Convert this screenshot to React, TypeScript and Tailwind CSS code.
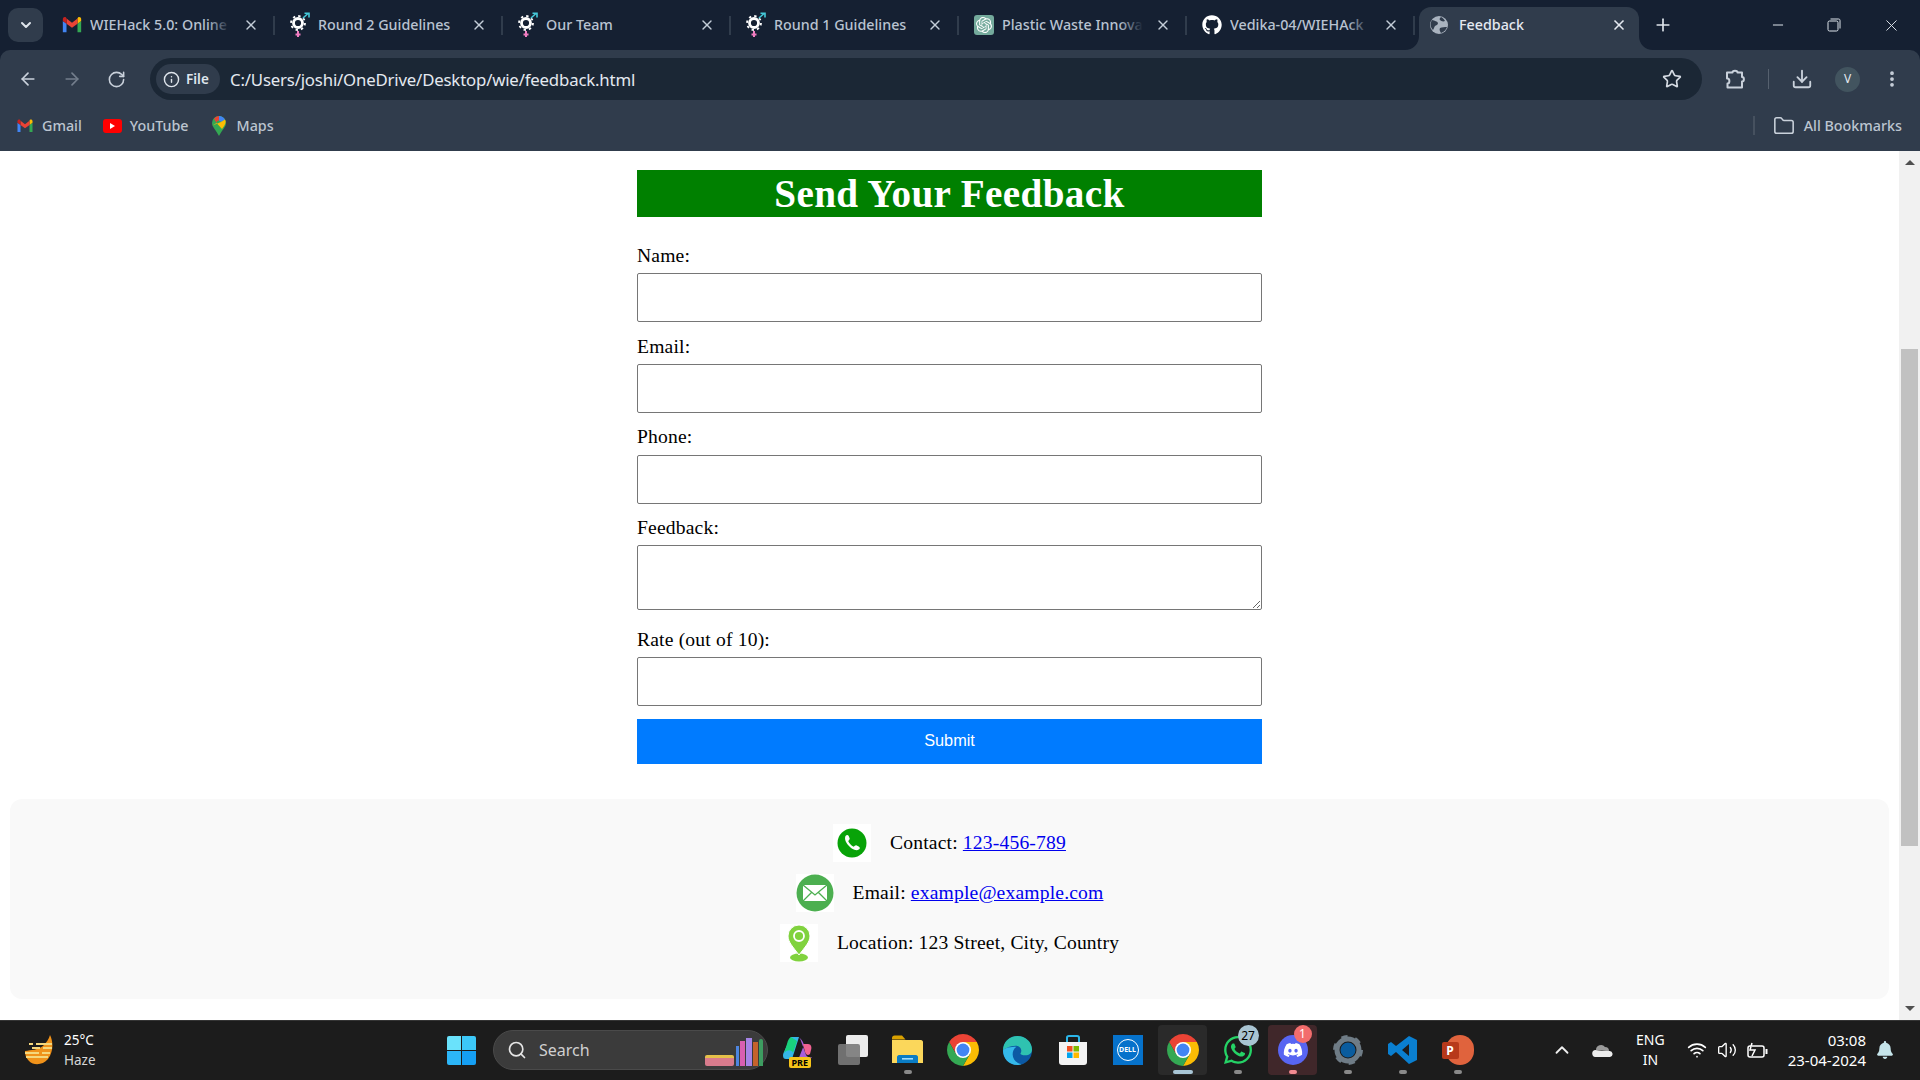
import React from "react";
import { ArrowLeft, ArrowRight, ChevronDown, ChevronUp, Download, Folder, Info, Minus, MoreVertical, Plus, RotateCw, Search, Star, Volume2, Wifi, X } from "lucide-react";
import { FaGithub, FaWhatsapp, FaDiscord, FaBell } from "react-icons/fa";
import { SiOpenai } from "react-icons/si";

const GenderGear = () => (
    <svg width="22" height="26" viewBox="0 0 22 26" fill="none">
        <circle cx="9" cy="11" r="4.500" stroke="#fff" strokeWidth="2.800" />
        <circle cx="9" cy="11" r="7" stroke="#fff" strokeWidth="1.800" strokeDasharray="2.400 3.100" />
        <path d="M14 6 19 1.500M15.500 1.200H20V5.500" stroke="#45c8d8" strokeWidth="1.600" />
        <path d="M9 19v6M6.500 22.500h5" stroke="#f07cc0" strokeWidth="2" />
    </svg>
);

const Gmail = ({ size = 18 }: { size?: number }) => (
    <svg width={size} height={size} viewBox="0 0 24 24">
        <path fill="#4285F4" d="M2 20h4v-9.500l-4-3z" />
        <path fill="#34A853" d="M18 20h4V7.500l-4 3z" />
        <path fill="#FBBC04" d="M18 5v5.500l4-3v-2c0-1.800-2-2.800-3.400-1.700z" />
        <path fill="#EA4335" d="M6 10.500V5l6 4.500L18 5v5.500L12 15z" />
        <path fill="#C5221F" d="M2 5.500v2l4 3V5L5.400 3.800C4 2.700 2 3.700 2 5.500z" />
    </svg>
);

const Chrome = () => (
    <svg width="32" height="32" viewBox="4 4 40 40">
        <path fill="#EA4335" d="M6.680 14A20 20 0 0 1 41.320 14L24 14 15.340 29z" />
        <path fill="#FBBC04" d="M41.320 14A20 20 0 0 1 24 44L32.660 29 24 14z" />
        <path fill="#34A853" d="M24 44A20 20 0 0 1 6.680 14L15.340 29 32.660 29z" />
        <circle cx="24" cy="24" r="10" fill="#fff" />
        <circle cx="24" cy="24" r="8" fill="#4285F4" />
    </svg>
);

const Edge = () => (
    <svg width="31" height="31" viewBox="0 0 32 32">
        <circle cx="16" cy="16" r="15" fill="#0c59a4" />
        <path fill="#2fc2b0" d="M1 16C1 7 8 1 16 1c8 0 15 6 15 14 0 4-3 6-7 6-3 0-5-1-5-2 2-2 1-8-5-8-6 0-11 3-13 5z" />
        <path fill="#35b9ea" d="M1 16c0 8 6 15 15 15 1 0 3 0 4-1-5-1-9-5-9-10 0-3 1-6 4-8-6 0-12 1-14 4z" />
    </svg>
);

const Store = () => (
    <svg width="30" height="32" viewBox="0 0 30 32">
        <path d="M9 8V3.500C9 2.500 10 2 11 2h8c1 0 2 .5 2 1.500V8" fill="none" stroke="#2bb5e8" strokeWidth="2" />
        <path d="M1 8h28v20c0 2-1 3-3 3H4c-2 0-3-1-3-3z" fill="#f3f3f3" />
        <rect x="9" y="12" width="5.500" height="5.500" fill="#f25022" />
        <rect x="15.500" y="12" width="5.500" height="5.500" fill="#7fba00" />
        <rect x="9" y="18.500" width="5.500" height="5.500" fill="#00a4ef" />
        <rect x="15.500" y="18.500" width="5.500" height="5.500" fill="#ffb900" />
    </svg>
);

const FileFolder = () => (
    <svg width="31" height="30" viewBox="0 0 31 30">
        <path d="M0 3c0-1.500 1-2.500 2.500-2.500H10l3.500 4H0z" fill="#d9a100" />
        <path d="M0 5h29c1 0 2 1 2 2v21H0z" fill="#fbd75b" />
        <path d="M5 28V22c0-1 1-2 2-2h17c1 0 2 1 2 2v6z" fill="#0a7cc4" />
        <rect x="10" y="23" width="11" height="1.600" fill="#9fdcff" />
    </svg>
);

const Copilot = () => (
    <div className="relative h-[30px] w-[30px]">
        <svg width="30" height="26" viewBox="0 0 30 26">
            <path d="M8 2h8L9 24H3C0 24-.5 21 .5 18z" fill="#35b6e8" />
            <path d="M8 2c-2 1-3 3-4 7l-3 9c4-4 8-3 9 0l4-12z" fill="#19d27c" />
            <path d="M14 2c2 0 3 1 4 4l5 14c1 2 4 3 6 2-1 2-3 3-5 3h-9l6-15c-1-4-4-8-7-8z" fill="#a65ddb" />
            <path d="M20 9h5c3 0 4 3 3 6l-1 4c-2 2-4 1-5-2z" fill="#f06292" />
        </svg>
        <div className="absolute -bottom-[3px] left-[6px] rounded-[2px] bg-[#f6c419] px-[3px] text-[9px] leading-[11px] font-bold text-black">PRE</div>
    </div>
);

const TaskView = () => (
    <div className="relative h-[30px] w-[30px]">
        <div className="absolute top-0 right-0 h-[22px] w-[22px] rounded-[2px] bg-[#ececec]" />
        <div className="absolute bottom-0 left-0 h-[21px] w-[22px] rounded-[2px] bg-[#7a7a7a]/90" />
    </div>
);

const Settings = () => (
    <svg width="30" height="30" viewBox="0 0 30 30">
        <circle cx="15" cy="15" r="11" fill="none" stroke="#6f7c86" strokeWidth="5" />
        <circle cx="15" cy="15" r="13" fill="none" stroke="#6f7c86" strokeWidth="4" strokeDasharray="6 7.600" />
        <circle cx="15" cy="15" r="7.500" fill="#0a5c9e" />
    </svg>
);

const VsCode = () => (
    <svg width="30" height="30" viewBox="0 0 30 30">
        <path d="M21 1l8 4v20l-8 4-13-12-5 4-3-2v-10l3-2 5 4zM21 9l-7 6 7 6z" fill="#0a7fd0" />
    </svg>
);

const Powerpoint = () => (
    <div className="relative h-[30px] w-[32px]">
        <div className="absolute top-0 right-0 h-[30px] w-[28px] rounded-full bg-[#e0633d]" />
        <div className="absolute top-[7px] left-0 flex h-[17px] w-[17px] items-center justify-center rounded-[2px] bg-[#b7391b] text-[12px] font-bold text-white">P</div>
    </div>
);

const Tab = ({ icon, title, fade }: { icon: React.ReactNode; title: string; fade?: boolean }) => (
    <div className="relative flex h-[36px] w-[228px] shrink-0 items-center pl-[14px]">
        <div className="flex w-[22px] justify-center">{icon}</div>
        <div className="relative ml-[7px] w-[141px] overflow-hidden text-[14.300px] font-medium whitespace-nowrap text-[#b9c3d1]">
            {title}
            {fade && <div className="absolute top-0 right-0 h-full w-[24px] bg-gradient-to-r from-transparent to-[#152032]" />}
        </div>
        <X size={16} strokeWidth={2} className="ml-[12px] text-[#c4cdd8]" />
        <div className="absolute top-[9px] right-0 h-[19px] w-[2px] bg-[#303c4c]" />
    </div>
);

const Chip = ({ active, activeBg, dot, children }: { active?: boolean; activeBg?: string; dot?: string; children: React.ReactNode }) => (
    <div className={`relative flex h-[50px] w-[55px] items-center justify-center ${active ? "rounded-[4px]" : ""}`}>
        {active && <div className={`absolute inset-x-[3px] inset-y-0 rounded-[4px] ${activeBg}`} />}
        <div className="relative">{children}</div>
        {dot && <div className={`absolute bottom-[1px] h-[4px] rounded-full ${dot}`} />}
    </div>
);

const Field = ({ label, type = "text", labelClass = "mb-[6px]" }: { label: string; type?: string; labelClass?: string }) => (
    <>
        <label className={`block h-[22px] leading-[22px] ${labelClass}`}>{label}</label>
        <input type={type} className="mb-[14px] block h-[49px] w-full rounded-[2px] border border-[#767676] bg-white" />
    </>
);

const App: React.FC = () => {
    return (
        <div className="flex h-screen w-full flex-col overflow-hidden bg-[#152032] font-['Noto_Sans',sans-serif]">
            {/* tab strip */}
            <div className="flex h-[50px] shrink-0 items-start pt-[7px]">
                <div className="mt-[1px] ml-[8px] flex h-[34px] w-[35px] items-center justify-center rounded-[10px] bg-[#303c4c] text-[#dfe5ec]">
                    <ChevronDown size={16} strokeWidth={3} />
                </div>
                <div className="ml-[4px] flex">
                    <Tab icon={<Gmail size={22} />} title="WIEHack 5.0: Online" fade />
                    <Tab icon={<GenderGear />} title="Round 2 Guidelines" />
                    <Tab icon={<GenderGear />} title="Our Team" />
                    <Tab icon={<GenderGear />} title="Round 1 Guidelines" />
                    <Tab icon={<div className="flex h-[20px] w-[20px] items-center justify-center rounded-[3px] bg-[#74aa9c] text-white"><SiOpenai size={16} /></div>} title="Plastic Waste Innova" fade />
                    <Tab icon={<FaGithub size={20} className="text-white" />} title="Vedika-04/WIEHAck" fade />
                </div>
                <div className="relative ml-[4px] flex h-[43px] w-[220px] shrink-0 items-start rounded-t-[12px] bg-[#303c4c] pt-[9px] pl-[11px] text-[#e4e9f0]">
                    <svg width="18" height="18" viewBox="0 0 18 18">
                        <circle cx="9" cy="9" r="9" fill="#a9b3bf" />
                        <path d="M2 4c3 1 5 1 6 3 0 2-2 2-3 3s-1 3-2 4C0 11 0 7 2 4zM11 1c2 1 3 2 4 4-2 1-4 0-5-1s0-2 1-3zM10 12c2-1 5-1 7-1-1 3-3 5-6 6-1-2-2-3-1-5z" fill="#303c4c" />
                    </svg>
                    <span className="-mt-[1px] ml-[11px] text-[14.300px] leading-[20px] font-medium">Feedback</span>
                    <X size={16} strokeWidth={2.500} className="absolute top-[10px] right-[12px]" />
                    <svg className="absolute bottom-0 -left-[14px]" width="14" height="14" viewBox="0 0 14 14"><path d="M14 0v14H0c8 0 14-6 14-14z" fill="#303c4c" /></svg>
                    <svg className="absolute -right-[14px] bottom-0" width="14" height="14" viewBox="0 0 14 14"><path d="M0 0v14h14C6 14 0 8 0 0z" fill="#303c4c" /></svg>
                </div>
                <Plus size={20} strokeWidth={2} className="mt-[8px] ml-[14px] text-[#dfe5ec]" />
                <div className="mt-[4px] ml-auto flex h-[28px] items-center text-[#dfe5ec]">
                    <div className="flex w-[56px] justify-center"><Minus size={16} strokeWidth={1.500} /></div>
                    <div className="flex w-[56px] justify-center">
                        <svg width="14" height="14" viewBox="0 0 14 14" fill="none" stroke="currentColor"><rect x="1" y="3" width="10" height="10" rx="1.500" /><path d="M3.500 1H11.500C12.500 1 13 1.500 13 2.500V10.500" /></svg>
                    </div>
                    <div className="flex w-[58px] justify-center"><X size={19} strokeWidth={1.200} /></div>
                </div>
            </div>

            {/* toolbar */}
            <div className="flex h-[50px] shrink-0 items-start rounded-t-[10px] bg-[#303c4c] pt-[8px] text-[#c9d1db]">
                <div className="ml-[18px] flex h-[42px] items-center gap-[24px]">
                    <ArrowLeft size={20} strokeWidth={2} />
                    <ArrowRight size={20} strokeWidth={2} className="text-[#737e8c]" />
                    <RotateCw size={19} strokeWidth={2} className="ml-[1px]" />
                </div>
                <div className="ml-[24px] flex h-[42px] w-[1552px] items-center rounded-full bg-[#1b2735] pl-[6px]">
                    <div className="flex h-[30px] w-[64px] items-center rounded-full bg-[#303c4c] pl-[7px] text-[#dfe5ec]">
                        <Info size={17} strokeWidth={2} />
                        <span className="ml-[6px] text-[13.500px] font-semibold">File</span>
                    </div>
                    <span className="mt-[1px] ml-[10px] text-[16.800px] tracking-[-0.18px] text-[#e4e9f0]">C:/Users/joshi/OneDrive/Desktop/wie/feedback.html</span>
                    <Star size={20} strokeWidth={2} className="mr-[20px] ml-auto text-[#d5dbe3]" />
                </div>
                <div className="flex h-[42px] items-center">
                    <svg className="ml-[23px]" width="21" height="21" viewBox="0 0 21 21" fill="none" stroke="currentColor" strokeWidth="2" strokeLinejoin="round">
                        <path d="M2 3.500h5.500C7.500 1 12.500 1 12.500 3.500H17v4.500c2.500 0 2.500 4.500 0 4.500v6H2.500v-4c2.500 0 2.500-5 0-5H2z" />
                    </svg>
                    <div className="ml-[22px] h-[20px] w-[1px] bg-[#56616f]" />
                    <Download size={22} strokeWidth={2} className="ml-[22px]" />
                    <div className="ml-[22px] flex h-[25px] w-[25px] items-center justify-center rounded-full bg-[#42545f] text-[12px] text-[#e4e9f0]">V</div>
                    <MoreVertical size={20} strokeWidth={2.500} className="ml-[22px]" />
                </div>
            </div>

            {/* bookmarks */}
            <div className="flex h-[51px] shrink-0 items-center bg-[#303c4c] text-[14.300px] font-medium text-[#bcc5d0]">
                <div className="ml-[16px] flex items-center gap-[8px]"><Gmail /><span>Gmail</span></div>
                <div className="ml-[21px] flex items-center gap-[8px]">
                    <div className="flex h-[14px] w-[19px] items-center justify-center rounded-[3px] bg-[#f00]">
                        <div className="h-0 w-0 border-y-[3px] border-l-[5px] border-y-transparent border-l-white" />
                    </div>
                    <span>YouTube</span>
                </div>
                <div className="ml-[23px] flex items-center gap-[11px]">
                    <svg width="14" height="20" viewBox="0 0 14 20">
                        <path d="M7 0a7 7 0 0 1 7 7c0 4-4 7-7 13C4 14 0 11 0 7a7 7 0 0 1 7-7z" fill="#34a853" />
                        <path d="M2 2.500A7 7 0 0 1 7 0v4.500A2.500 2.500 0 0 0 4.500 7z" fill="#ea4335" />
                        <path d="M7 0a7 7 0 0 1 6 3.500L9 6a2.500 2.500 0 0 0-2-1.500z" fill="#4285f4" />
                        <path d="M.5 9.500 9 6l4-2.500C15 7 12 10 10 13L4.500 7z" fill="#fbbc04" />
                    </svg>
                    <span>Maps</span>
                </div>
                <div className="ml-auto h-[19px] w-[2px] bg-[#46515f]" />
                <Folder size={22} strokeWidth={1.700} className="ml-[18px] text-[#c9d1db]" />
                <span className="mr-[18px] ml-[9px]">All Bookmarks</span>
            </div>

            {/* page */}
            <div className="flex min-h-0 flex-1 bg-white font-['Liberation_Serif',serif] text-[19.600px] tracking-[0.17px] text-black">
                <div className="flex min-w-0 flex-1 flex-col items-center pt-[19px]">
                    <form className="w-[625px]">
                        <h1 className="mb-[28px] h-[47px] bg-[#008000] text-center text-[39.200px] leading-[47px] font-bold tracking-[0.35px] text-white">Send Your Feedback</h1>
                        <Field label="Name:" />
                        <Field label="Email:" type="email" />
                        <Field label="Phone:" type="tel" labelClass="-mt-px mb-[7px]" />
                        <label className="-mt-px mb-[6px] block h-[22px] leading-[22px]">Feedback:</label>
                        <textarea className="mb-[19px] block h-[65px] w-full rounded-[2px] border border-[#767676] bg-white" />
                        <Field label="Rate (out of 10):" type="number" />
                        <button type="button" className="-mt-px block h-[45px] w-full bg-[#007bff] pb-[2px] font-['Liberation_Sans',sans-serif] text-[16.300px] tracking-normal text-white">Submit</button>
                    </form>
                    <footer className="mt-[35px] flex h-[200px] w-[1879px] flex-col items-center gap-[12px] rounded-[12px] bg-[#f9f9f9] pt-[25px]">
                        <div className="flex h-[38px] items-center gap-[19px]">
                            <div className="flex h-[38px] w-[38px] items-center justify-center bg-white">
                                <svg width="30" height="30" viewBox="0 0 30 30">
                                    <circle cx="15" cy="15" r="14.500" fill="#08a308" />
                                    <path d="M8.500 8c1-1.500 2.500-1.500 3.200 0l1 2.500c.2.800-.8 1.700-1.500 2.500 1 2.500 3 4.500 5.500 5.700.8-.7 1.700-1.700 2.500-1.500l2.500 1.200c1.500.7 1.500 2.200 0 3.200-5 3-16-7.500-13.200-13.600z" fill="#fff" />
                                </svg>
                            </div>
                            <span>Contact: <a href="#" className="text-[#0000ee] underline">123-456-789</a></span>
                        </div>
                        <div className="flex h-[38px] items-center gap-[19px]">
                            <div className="flex h-[38px] w-[38px] items-center justify-center bg-white">
                                <svg width="38" height="38" viewBox="0 0 38 38">
                                    <circle cx="19" cy="19" r="18.500" fill="#4caf50" />
                                    <path d="M7 11h24v16H7z" fill="#fff" />
                                    <path d="M7 11l12 10 12-10M7 27l9-9M31 27l-9-9" fill="none" stroke="#4caf50" strokeWidth="1.300" />
                                </svg>
                            </div>
                            <span>Email: <a href="#" className="text-[#0000ee] underline">example@example.com</a></span>
                        </div>
                        <div className="flex h-[38px] items-center gap-[19px]">
                            <div className="flex h-[38px] w-[38px] items-center justify-center bg-white">
                                <svg width="26" height="38" viewBox="0 0 26 38">
                                    <ellipse cx="13" cy="33.500" rx="9" ry="4" fill="#80d23e" />
                                    <path d="M13 1a11 11 0 0 1 11 11c0 6-5 11-11 19C7 23 2 18 2 12A11 11 0 0 1 13 1z" fill="#80d23e" stroke="#fff" />
                                    <circle cx="13" cy="12" r="5" fill="#80d23e" stroke="#fff" strokeWidth="1.800" />
                                </svg>
                            </div>
                            <span>Location: 123 Street, City, Country</span>
                        </div>
                    </footer>
                </div>
                {/* scrollbar */}
                <div className="flex w-[21px] shrink-0 flex-col items-center bg-[#f1f1f1]">
                    <div className="mt-[9px] h-0 w-0 border-x-[5px] border-b-[5px] border-x-transparent border-b-[#505050]" />
                    <div className="mt-[184px] h-[497px] w-[17px] bg-[#c1c1c1]" />
                    <div className="mt-auto mb-[9px] h-0 w-0 border-x-[5px] border-t-[5px] border-x-transparent border-t-[#505050]" />
                </div>
            </div>

            {/* taskbar */}
            <div className="flex h-[60px] shrink-0 items-center border-t border-[#343434] bg-[#1c1c1c] pb-[1px] text-white">
                <div className="flex w-[434px] items-center pl-[24px]">
                    <svg width="31" height="30" viewBox="0 0 31 30">
                        <path d="M26 0c3 6 4 16-2 24-5 6-14 7-19 2C2 23 1 20 1 16c6-1 13-1 18-5 3-3 6-7 7-11z" fill="#f0921a" />
                        <path d="M5 9h4M12 9h16M8 13h8M19 13h9M1 18h14M18 18h8M2 22h22" stroke="#f5d77c" strokeWidth="2.200" />
                    </svg>
                    <div className="ml-[9px] text-[13.500px] leading-[20px]">
                        <div>25°C</div>
                        <div className="text-[#d6d6d6]">Haze</div>
                    </div>
                </div>
                <div className="flex w-[55px] justify-center">
                    <div className="grid h-[29px] w-[29px] grid-cols-2 gap-[1px]">
                        <div className="rounded-tl-[2px] bg-[#6ae2fb]" />
                        <div className="rounded-tr-[2px] bg-[#3cc8f8]" />
                        <div className="rounded-bl-[2px] bg-[#2cb6f8]" />
                        <div className="rounded-br-[2px] bg-[#159ff4]" />
                    </div>
                </div>
                <div className="relative ml-[4px] flex h-[40px] w-[275px] items-center rounded-full border border-[#4a4a4a] bg-[#3b3b3b] pl-[13px]">
                    <Search size={20} strokeWidth={2} className="text-[#e6e6e6]" />
                    <span className="ml-[12px] text-[16px] text-[#d0d0d0]">Search</span>
                    <div className="absolute right-[4px] bottom-[3px] flex items-end gap-[1px]">
                        <div className="mr-[1px] h-[11px] w-[29px] rounded-[2px] border-t-[3px] border-[#e5c04a] bg-[#d87b8c]" />
                        <div className="h-[20px] w-[3px] bg-[#4d86e0]" />
                        <div className="h-[25px] w-[5px] bg-[#d85fb0]" />
                        <div className="h-[28px] w-[6px] bg-[#a684e6]" />
                        <div className="h-[24px] w-[5px] bg-[#c4622c]" />
                        <div className="h-[27px] w-[4px] rounded-t-[2px] bg-[#3d9c60]" />
                    </div>
                </div>
                <div className="ml-[2px] flex">
                    <Chip><Copilot /></Chip>
                    <Chip><TaskView /></Chip>
                    <Chip dot="w-[8px] bg-[#8a8a8a]"><FileFolder /></Chip>
                    <Chip><Chrome /></Chip>
                    <Chip><Edge /></Chip>
                    <Chip><Store /></Chip>
                    <Chip>
                        <div className="flex h-[30px] w-[30px] items-center justify-center bg-[#0672cb]">
                            <div className="flex h-[22px] w-[22px] items-center justify-center rounded-full border border-white text-[7px] font-bold text-white">DELL</div>
                        </div>
                    </Chip>
                    <Chip active activeBg="bg-[#2a2a2a]" dot="w-[20px] bg-[#a9c6d6]"><Chrome /></Chip>
                    <Chip dot="w-[8px] bg-[#8a8a8a]">
                        <FaWhatsapp size={32} className="text-[#25d366]" />
                        <div className="absolute -top-[9px] -right-[5px] flex h-[21px] w-[21px] items-center justify-center rounded-full bg-[#a9c4d2] text-[12px] text-black">27</div>
                    </Chip>
                    <Chip active activeBg="bg-[#40272a]" dot="w-[8px] bg-[#f08a90]">
                        <div className="flex h-[30px] w-[30px] items-center justify-center rounded-full bg-[#5865f2]"><FaDiscord size={20} className="text-white" /></div>
                        <div className="absolute -top-[10px] -right-[4px] flex h-[18px] w-[18px] items-center justify-center rounded-full bg-[#f26d6d] text-[12px] text-white">1</div>
                    </Chip>
                    <Chip dot="w-[8px] bg-[#8a8a8a]"><Settings /></Chip>
                    <Chip dot="w-[8px] bg-[#8a8a8a]"><VsCode /></Chip>
                    <Chip dot="w-[8px] bg-[#8a8a8a]"><Powerpoint /></Chip>
                </div>
                <div className="ml-auto flex items-center pr-[26px]">
                    <ChevronUp size={22} strokeWidth={2} className="text-[#eeeeee]" />
                    <svg className="ml-[19px]" width="21" height="14" viewBox="0 0 21 14">
                        <path d="M4 7a5 5 0 0 1 9-3 4 4 0 0 1 4 4h-3z" fill="#9a9a9a" />
                        <path d="M4 14a3.500 3.500 0 0 1-.5-7L10 8l7 0a3 3 0 0 1 1 6z" fill="#ececec" />
                    </svg>
                    <div className="ml-[23px] text-center text-[14px] leading-[20px]">
                        <div>ENG</div>
                        <div>IN</div>
                    </div>
                    <Wifi size={20} strokeWidth={2} className="ml-[22px]" />
                    <Volume2 size={20} strokeWidth={1.600} className="ml-[10px]" />
                    <svg className="ml-[10px]" width="21" height="16" viewBox="0 0 21 16" fill="none" stroke="#fff" strokeWidth="1.500">
                        <rect x="1" y="4" width="16" height="11" rx="2" />
                        <path d="M19.500 7v5" strokeWidth="2" />
                        <path d="M5 1 3 8h5l-3 6" fill="#1c1c1c" />
                    </svg>
                    <div className="ml-[20px] text-right text-[15px] leading-[20px]">
                        <div>03:08</div>
                        <div>23-04-2024</div>
                    </div>
                    <FaBell size={18} className="ml-[10px] text-[#c5e4ea]" />
                </div>
            </div>
        </div>
    );
};

export default App;
